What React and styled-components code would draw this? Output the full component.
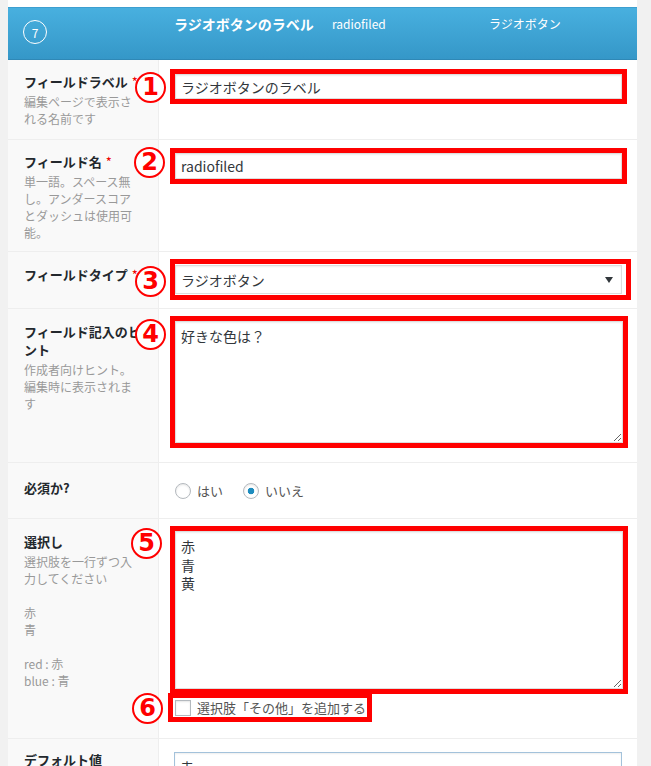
import React from "react";
import styled, { createGlobalStyle } from "styled-components";

const GlobalStyle = createGlobalStyle`
  html, body {
    margin: 0;
    padding: 0;
    background: #f1f1f1;
  }
  body {
    font-family: "Noto Sans CJK JP", "Noto Sans", sans-serif;
    color: #444;
  }
  * {
    box-sizing: border-box;
  }
`;

const Page = styled.div`
  width: 651px;
  height: 766px;
  overflow: hidden;
  padding-left: 8px;
`;

const Panel = styled.div`
  width: 629px;
  background: #fff;
  padding-top: 7px;
`;

// field header bar

const Header = styled.div`
  display: grid;
  grid-template-columns: 151px 158px 157px 1fr;
  height: 53px;
  background: linear-gradient(180deg, #48b0df 0%, #3597c8 100%);
  border-top: 1px solid #3c9fd0;
  border-bottom: 1px solid #2f88b6;
  color: #fff;
`;

const OrderCell = styled.div`
  padding: 12px 0 0 15px;
`;

const Order = styled.span`
  display: flex;
  align-items: center;
  justify-content: center;
  width: 24px;
  height: 24px;
  border: 1px solid #fff;
  border-radius: 50%;
  font-size: 12px;
`;

const HeadText = styled.div`
  padding: 6px 15px 0;
  font-size: ${p => p.$size || 12}px;
  font-weight: ${p => (p.$bold ? 700 : 400)};
  line-height: 20px;
  white-space: nowrap;
`;

// rows

const Row = styled.div`
  position: relative;
  display: grid;
  grid-template-columns: 151px 1fr;
  min-height: ${p => p.$h || 0}px;

  & + & {
    border-top: 1px solid #eee;
  }
`;

const LabelCell = styled.div`
  background: #f9f9f9;
  border-right: 1px solid #eee;
  padding: ${p => p.$top || 13}px 16px 9px 16px;
`;

const Label = styled.div`
  font-size: 13px;
  font-weight: 700;
  line-height: 18px;
  color: #23282d;
`;

const Req = styled.span`
  color: #e00;
  font-weight: 400;
  margin-left: 4px;
`;

const Desc = styled.div`
  margin-top: 2px;
  font-size: 12px;
  line-height: 17px;
  color: #999;
`;

const FieldCell = styled.div`
  padding: ${p => p.$top || 8}px 10px 8px ${p => p.$left || 11}px;
  display: ${p => (p.$center ? "flex" : "block")};
  flex-direction: column;
  justify-content: center;
`;

// red annotation frame around a control
const Marker = styled.div`
  display: ${p => (p.$inline ? "inline-flex" : "block")};
  align-items: center;
  position: relative;
  border: 5px solid #f00;
  padding: ${p => p.$pad || "0"};
  margin: ${p => p.$margin || "0"};
  align-self: flex-start;
`;

const TextInput = styled.input`
  display: block;
  width: 100%;
  height: ${p => p.$h || 26}px;
  border: 1px solid ${p => (p.$focus ? "#a3c2db" : "#ddd")};
  box-shadow: inset 0 1px 2px rgba(0, 0, 0, 0.07);
  padding: 0 5px;
  margin: 0;
  font-family: inherit;
  font-size: 14px;
  color: #32373c;
  outline: none;
  background: #fff;
`;

const Select = styled.select`
  display: block;
  width: 100%;
  height: 29px;
  border: 1px solid #ddd;
  box-shadow: inset 0 1px 2px rgba(0, 0, 0, 0.07);
  padding: 0 5px;
  margin: 0;
  font-family: inherit;
  font-size: 14px;
  color: #32373c;
  background: #fff;
  appearance: none;
  outline: none;
`;

const Arrow = styled.svg`
  position: absolute;
  right: 13px;
  top: 50%;
  margin-top: -3px;
  pointer-events: none;
`;

const TextArea = styled.textarea`
  display: block;
  width: 100%;
  height: ${p => p.$h}px;
  border: 1px solid #ddd;
  box-shadow: inset 0 1px 2px rgba(0, 0, 0, 0.07);
  padding: 5px 5px;
  margin: 0;
  font-family: inherit;
  font-size: 14px;
  line-height: 18.5px;
  color: #32373c;
  outline: none;
  resize: both;
`;

const Choices = styled.div`
  display: flex;
  align-items: center;
  gap: 20px;
  margin-left: 5px;
`;

const Choice = styled.label`
  display: flex;
  align-items: center;
  gap: 6px;
  font-size: 13px;
  color: #555;
`;

const Radio = styled.input`
  appearance: none;
  width: 16px;
  height: 16px;
  margin: 0;
  border: 1px solid #b4b9be;
  border-radius: 50%;
  box-shadow: inset 0 1px 2px rgba(0, 0, 0, 0.1);
  background: #fff;

  &:checked {
    background: radial-gradient(circle, #1e8cbe 0 3px, #fff 3.6px);
  }
`;

const Check = styled.input`
  appearance: none;
  width: 16px;
  height: 16px;
  margin: 0 6px 0 0;
  border: 1px solid #b4b9be;
  box-shadow: inset 0 1px 2px rgba(0, 0, 0, 0.1);
  background: #fff;
`;

const CheckText = styled.span`
  font-size: 13px;
  color: #555;
  line-height: 19px;
`;

// circled annotation numbers laid over the label edge
const Num = styled.span`
  position: absolute;
  left: ${p => p.$x}px;
  top: ${p => p.$y}px;
  width: 31px;
  height: 31px;
  border: 2.5px solid #f00;
  border-radius: 50%;
  background: #fff;
  color: #f00;
  display: flex;
  align-items: center;
  justify-content: center;
  font-family: "DejaVu Sans", sans-serif;
  font-weight: 700;
  font-size: 24px;
  line-height: 1;
  padding-bottom: 1px;
`;

const App = () => {
  return (
    <Page>
      <GlobalStyle />
      <Panel>
        <Header>
          <OrderCell>
            <Order>7</Order>
          </OrderCell>
          <HeadText $size={14} $bold>
            ラジオボタンのラベル
          </HeadText>
          <HeadText>radiofiled</HeadText>
          <HeadText>ラジオボタン</HeadText>
        </Header>

        <Row $h={79}>
          <LabelCell>
            <Label>
              フィールドラベル<Req>*</Req>
            </Label>
            <Desc>編集ページで表示される名前です</Desc>
          </LabelCell>
          <FieldCell $top={9}>
            <Marker>
              <TextInput $h={25} defaultValue="ラジオボタンのラベル" />
            </Marker>
          </FieldCell>
          <Num $x={127} $y={12}>1</Num>
        </Row>

        <Row $h={112}>
          <LabelCell>
            <Label>
              フィールド名<Req>*</Req>
            </Label>
            <Desc>単一語。スペース無し。アンダースコアとダッシュは使用可能。</Desc>
          </LabelCell>
          <FieldCell>
            <Marker>
              <TextInput defaultValue="radiofiled" />
            </Marker>
          </FieldCell>
          <Num $x={126} $y={7}>2</Num>
        </Row>

        <Row $h={57}>
          <LabelCell $top={14}>
            <Label>
              フィールドタイプ<Req>*</Req>
            </Label>
          </LabelCell>
          <FieldCell $top={7}>
            <Marker $pad="1px 4px 1px 0" $margin="0 -4px 0 0">
              <Select defaultValue="radio">
                <option value="radio">ラジオボタン</option>
              </Select>
              <Arrow width="8" height="6" viewBox="0 0 8 6">
                <path d="M0 0h8L4 6z" fill="#32373c" />
              </Arrow>
            </Marker>
          </FieldCell>
          <Num $x={127} $y={14}>3</Num>
        </Row>

        <Row $h={154}>
          <LabelCell $top={14}>
            <Label>フィールド記入のヒント</Label>
            <Desc>作成者向けヒント。編集時に表示されます</Desc>
          </LabelCell>
          <FieldCell $top={7}>
            <Marker $margin="0 -1px 0 0">
              <TextArea $h={122} defaultValue="好きな色は？" />
            </Marker>
          </FieldCell>
          <Num $x={127} $y={10}>4</Num>
        </Row>

        <Row $h={56}>
          <LabelCell $top={16}>
            <Label>必須か?</Label>
          </LabelCell>
          <FieldCell $center $left={11}>
            <Choices>
              <Choice>
                <Radio type="radio" name="req" />
                はい
              </Choice>
              <Choice>
                <Radio type="radio" name="req" defaultChecked />
                いいえ
              </Choice>
            </Choices>
          </FieldCell>
        </Row>

        <Row $h={220}>
          <LabelCell $top={14}>
            <Label>選択し</Label>
            <Desc>
              選択肢を一行ずつ入力してください
              <br />
              <br />
              赤
              <br />
              青
              <br />
              <br />
              red : 赤
              <br />
              blue : 青
            </Desc>
          </LabelCell>
          <FieldCell $top={7}>
            <Marker $margin="0 -1px 0 0">
              <TextArea $h={158} defaultValue={"赤\n青\n黄"} />
            </Marker>
            <Marker $inline $pad="0 1px 0 2px" $margin="-1px 0 0 -2px">
              <Check type="checkbox" />
              <CheckText>選択肢「その他」を追加する</CheckText>
            </Marker>
          </FieldCell>
          <Num $x={123} $y={9}>5</Num>
          <Num $x={124} $y={174}>6</Num>
        </Row>

        <Row $h={60}>
          <LabelCell $top={12}>
            <Label>デフォルト値</Label>
          </LabelCell>
          <FieldCell $top={13} $left={15}>
            <TextInput $h={30} $focus defaultValue="赤" style={{ width: 448 }} />
          </FieldCell>
        </Row>
      </Panel>
    </Page>
  );
};

export default App;
